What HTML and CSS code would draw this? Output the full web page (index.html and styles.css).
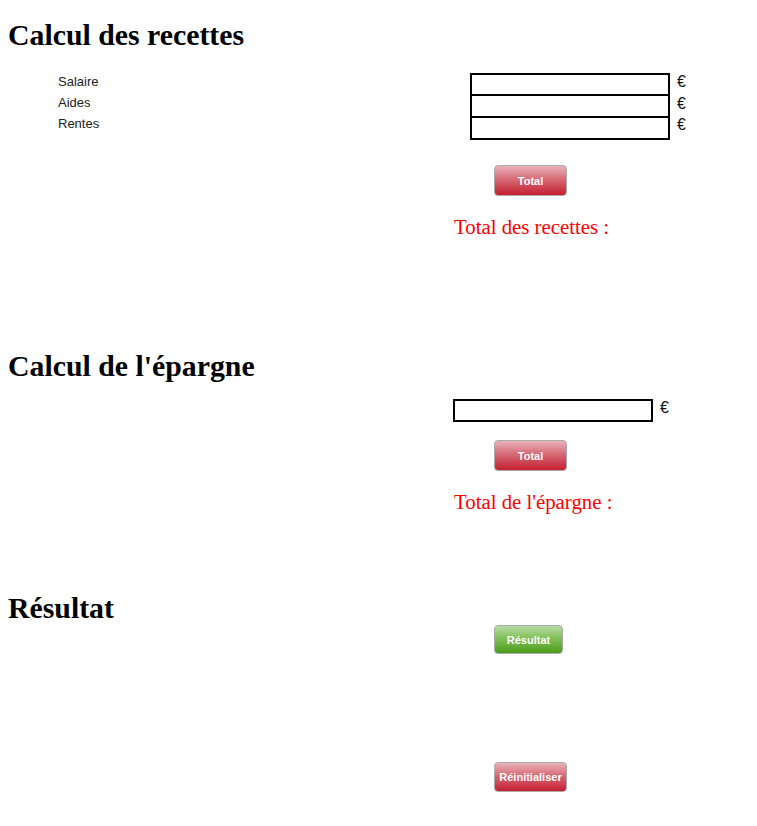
FILE: index.html
```html
<!DOCTYPE html>
<html lang="fr">
<head>
<meta charset="utf-8">
<title>Budget</title>
<link rel="stylesheet" href="styles.css">
</head>
<body>
<section class="block block-recettes">
  <h2 class="title">Calcul des recettes</h2>
  <div class="grid">
    <div class="labels">
      <div class="label">Salaire</div>
      <div class="label">Aides</div>
      <div class="label">Rentes</div>
    </div>
    <div class="right">
      <div class="fields fields-indent">
        <div class="inputs">
          <input class="field" type="text">
          <input class="field field-next" type="text">
          <input class="field field-next" type="text">
        </div>
        <div class="units">
          <span class="unit">€</span>
          <span class="unit">€</span>
          <span class="unit">€</span>
        </div>
      </div>
      <button class="btn btn-red btn-total btn-first">Total</button>
      <p class="result">Total des recettes :</p>
    </div>
  </div>
</section>

<section class="block block-epargne">
  <h2 class="title">Calcul de l'épargne</h2>
  <div class="grid grid-epargne">
    <div class="labels"></div>
    <div class="right">
      <div class="fields">
        <div class="inputs">
          <input class="field" type="text">
        </div>
        <div class="units units-single">
          <span class="unit">€</span>
        </div>
      </div>
      <button class="btn btn-red btn-total btn-second">Total</button>
      <p class="result">Total de l'épargne :</p>
    </div>
  </div>
</section>

<section class="block block-resultat">
  <h2 class="title">Résultat</h2>
  <div class="grid grid-resultat">
    <div class="labels"></div>
    <div class="right">
      <button class="btn btn-green btn-result">Résultat</button>
      <button class="btn btn-red btn-reset">Réinitialiser</button>
    </div>
  </div>
</section>
</body>
</html>
```

FILE: styles.css
```css
html, body {
  margin: 0;
  padding: 0;
  background: #ffffff;
}

body {
  padding: 0 8px;
  font-family: "Liberation Serif", "Times New Roman", serif;
  color: #000;
}

.title {
  margin: 0;
  font-family: "Liberation Serif", "Times New Roman", serif;
  font-weight: bold;
  font-size: 29.8px;
  line-height: 34px;
}

.block-recettes .title { margin-top: 18px; }
.block-epargne .title { margin-top: 110px; }
.block-resultat .title { margin-top: 77px; }

.grid {
  display: grid;
  grid-template-columns: 445px 1fr;
  margin-top: 19px;
}

.grid-epargne { margin-top: 16px; }
.grid-resultat { margin-top: 0; }

.labels {
  padding-left: 50px;
  padding-top: 1px;
  font-family: "Liberation Sans", Arial, sans-serif;
  font-size: 13px;
  line-height: 20.8px;
  color: #222;
}

.label { display: block; }

.right {
  display: flex;
  flex-direction: column;
  align-items: flex-start;
}

.fields {
  display: flex;
  align-items: flex-start;
  gap: 7px;
}

.fields-indent { padding-left: 17px; }

.inputs {
  display: flex;
  flex-direction: column;
}

.fields-indent .inputs { margin-top: 2px; }

.field {
  box-sizing: border-box;
  display: block;
  width: 200px;
  height: 23px;
  margin: 0;
  padding: 0 2px;
  border: 2px solid #000;
  border-radius: 0;
  background: #fff;
  outline: none;
}

.field-next {
  border-top: 0;
  height: 22px;
}

.units {
  display: flex;
  flex-direction: column;
  font-family: "Liberation Sans", Arial, sans-serif;
  font-size: 16px;
  line-height: 21.6px;
  color: #111;
}

.units-single { margin-top: -2px; }

.btn {
  box-sizing: border-box;
  margin: 0 0 0 41px;
  padding: 0;
  border: 1px solid #aaaaaa;
  border-radius: 4px;
  font-family: "Liberation Sans", Arial, sans-serif;
  font-weight: bold;
  font-size: 11px;
  color: #fff;
  text-align: center;
  cursor: pointer;
}

.btn-red {
  background: linear-gradient(to bottom, #e9b3ba 0%, #d76a77 45%, #c41f30 100%);
}

.btn-green {
  background: linear-gradient(to bottom, #b7dca4 0%, #82c05a 45%, #4c9c1c 100%);
}

.btn-total {
  width: 73px;
  height: 31px;
}

.btn-first { margin-top: 25px; }
.btn-second { margin-top: 18px; }

.btn-result {
  width: 69px;
  height: 29px;
  margin-top: 0;
}

.btn-reset {
  width: 73px;
  height: 30px;
  margin-top: 108px;
}

.result {
  margin: 19px 0 0 1px;
  font-family: "Liberation Serif", "Times New Roman", serif;
  font-size: 20.8px;
  line-height: 24px;
  color: #ff0000;
}
```
